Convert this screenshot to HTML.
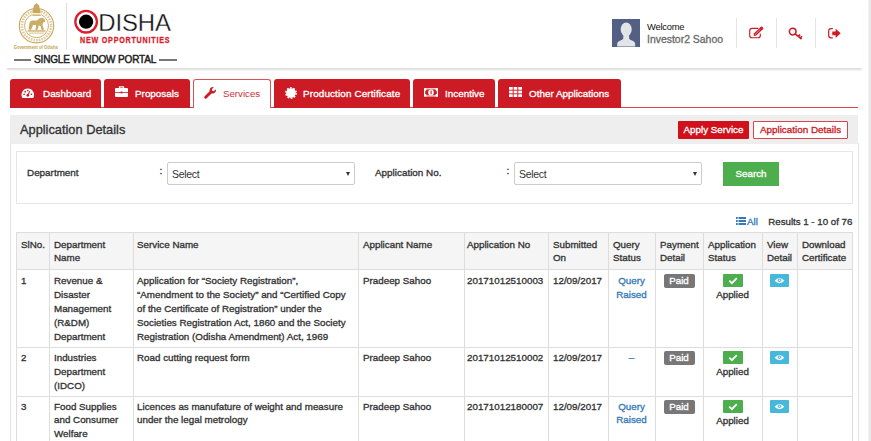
<!DOCTYPE html>
<html><head><meta charset="utf-8">
<style>
*{box-sizing:border-box;margin:0;padding:0}
html,body{width:871px;height:441px;overflow:hidden;background:#fff}
body{font-family:"Liberation Sans",sans-serif;color:#333;position:relative;font-size:9.8px}
.abs{position:absolute}
.m{-webkit-text-stroke:0.32px currentColor}
#sb{left:869px;top:0;width:2px;height:441px;background:#e8e8e8;box-shadow:-1px 0 0 #f3f3f3}
#hdr{left:6px;top:0;width:857px;height:68px;background:#fff;box-shadow:0 3px 2px -1px rgba(0,0,0,.14)}
.tab{position:absolute;top:79px;height:29px;background:#cc1b25;border-radius:3px 3px 0 0;color:#fff;font-size:9.9px;line-height:29.4px;white-space:nowrap}
.tab span{position:absolute;top:0}
.tab svg{position:absolute}
#tabline{left:10px;top:107px;width:848px;height:1px;background:#d9434b}
.tab.act{background:#fff;border:1px solid #dc5058;border-bottom:none;color:#cc3038;top:79px;height:29px}
#ph{left:10px;top:115px;width:848px;height:28.5px;background:#eee}
#pb{left:10px;top:143px;width:849px;height:300px;border:1px solid #e4e4e4;border-top:none}
#sbx{left:16px;top:151px;width:837px;height:53px;border:1px solid #e6e6e6}
.sel{position:absolute;top:162px;height:23px;border:1px solid #ccc;border-radius:2px;background:#fff;font-size:10.5px;letter-spacing:-0.3px;line-height:22px;padding-left:4px;color:#333}
.sel:after{content:"";position:absolute;right:4px;top:9px;border:2.6px solid transparent;border-top:4.5px solid #333}
.lbl{position:absolute;font-size:9.9px;top:167px;line-height:12px;white-space:nowrap}
table{position:absolute;left:16px;top:232px;width:836px;border-collapse:collapse;table-layout:fixed;font-size:9.8px;line-height:13.9px}
td,th{border:1px solid #ddd;padding:4.5px 3px 3.5px 4px;vertical-align:top;text-align:left;font-weight:normal;overflow:hidden;white-space:nowrap}
th{background:#f5f5f5}
a{color:#337ab7;text-decoration:none}
.paid{display:inline-block;background:#777;color:#fff;border-radius:2px;font-size:9.8px;line-height:14px;height:14px;width:31px;text-align:center;margin-top:0;vertical-align:top}
.ok{display:block;margin:0 auto 1px;width:20px;height:13px;background:#4cae4c;border-radius:1px;position:relative}
.eye{display:block;margin:0 0 0 3px;width:19px;height:13px;background:#46b8da;border-radius:1px;position:relative}
td.c{text-align:center;padding-left:2px;padding-right:3px}
tr.r2 td{padding-top:3px;padding-bottom:3.5px}
tr.r3 td{padding-top:2.5px}
tr.r1 td{padding-top:4.3px;padding-bottom:3.2px}
.an{padding-left:2px;padding-right:0}
.sv{padding-left:3px}
</style></head><body>
<div class="abs" id="sb"></div>
<div class="abs" id="hdr"></div>

<!-- emblem -->
<svg class="abs" style="left:12px;top:0px" width="50" height="54" viewBox="0 0 50 54">
 <circle cx="24.5" cy="25.7" r="17.2" fill="#fff" stroke="#c9a85f" stroke-width="1.1"/>
 <circle cx="24.5" cy="25.7" r="14.6" fill="none" stroke="#e0cb9c" stroke-width="2.6" stroke-dasharray="1.6 1.1"/>
 <circle cx="24.5" cy="25.7" r="12" fill="#fff" stroke="#c9a85f" stroke-width="0.9"/>
 <path d="M21 14 q-1.500 -3 0.500 -5.500 q-0.500 -3.500 3 -5.300 q3.500 1.800 3 5.300 q2 2.500 0.500 5.500z" fill="#c9a85f"/>
 <rect x="20" y="13.200" width="9" height="1.600" fill="#fff"/>
 <rect x="20.300" y="14.500" width="8.400" height="1.300" fill="#c9a85f"/>
 <path d="M16.500 29.500 l1 -6.500 q0.500 -2.500 3.500 -2.500 h4 q2.500 -3.500 6 -2.500 q2.500 1 2 4 l-2 0.500 l-0.500 3 q1.500 2 1 4.500 h-2 l-0.800 -3.800 l-2 -1 l-1.200 4.800 h-2 l0.500 -5 h-3 l-2 5z" fill="#ccac66"/>
 <rect x="15.500" y="30.300" width="18" height="1.300" fill="#c9a85f"/>
 <rect x="17" y="32.600" width="15" height="1" fill="#d9c08a"/>
 <text x="23.800" y="49.300" font-size="4.700" text-anchor="middle" fill="#c59f4c" font-family="Liberation Sans" font-weight="bold" textLength="44" lengthAdjust="spacingAndGlyphs">Government of Odisha</text>
</svg>
<div class="abs" style="left:66px;top:3px;width:1px;height:47px;background:#ddd"></div>
<!-- ODISHA logo -->
<svg class="abs" style="left:73px;top:9px" width="27" height="26" viewBox="0 0 27 26">
 <circle cx="13.100" cy="12.700" r="10.800" fill="#fff" stroke="#e21c2a" stroke-width="2.300"/>
 <circle cx="13.100" cy="12.700" r="7.150" fill="#000"/>
</svg>
<div class="abs" id="disha" style="left:98.3px;top:9.3px;font-size:23.9px;line-height:28px;color:#111;letter-spacing:-0.1px;-webkit-text-stroke:0.3px #fff">DISHA</div>
<div class="abs" id="newopp" style="left:79.7px;top:33.6px;font-size:9.4px;line-height:12px;font-weight:bold;color:#d5202c;letter-spacing:1.04px;white-space:nowrap;transform-origin:0 0;transform:scaleX(0.76);-webkit-text-stroke:0.3px #d5202c">NEW OPPORTUNITIES</div>
<div class="abs" style="left:13.7px;top:58.8px;width:17.1px;height:2.7px;background:#777"></div>
<div class="abs" id="swp" style="-webkit-text-stroke:0.45px #222;left:34px;top:54px;font-size:10px;line-height:12px;color:#222;white-space:nowrap;letter-spacing:-0.15px">SINGLE WINDOW PORTAL</div>
<div class="abs" style="left:159.3px;top:58.8px;width:17.3px;height:2.7px;background:#777"></div>

<!-- user -->
<div class="abs" style="left:612px;top:19px;width:28px;height:28px;background:#535f83;overflow:hidden">
 <svg width="28" height="28" viewBox="0 0 28 28" style="display:block"><ellipse cx="14.200" cy="10.400" rx="5.500" ry="7" fill="#e2e5e6"/><path d="M11.300 15 h5.800 v4.200 q0.300 1.600 3.500 2.600 q2.600 0.800 2.600 3 v2.700 h-18 v-2.700 q0 -2.200 2.600 -3 q3.200 -1 3.500 -2.600z" fill="#e2e5e6"/></svg>
</div>
<div class="abs" id="wel" style="left:647px;top:20.5px;font-size:9.4px;line-height:12px;color:#111;letter-spacing:-0.25px">Welcome</div>
<div class="abs m" id="inv" style="left:647px;top:33.5px;font-size:10.45px;line-height:12px;color:#6c6c6c;white-space:nowrap">Investor2 Sahoo</div>
<div class="abs" style="left:736px;top:18px;width:1px;height:30px;background:#e3e3e3"></div>
<div class="abs" style="left:776px;top:18px;width:1px;height:30px;background:#e3e3e3"></div>
<div class="abs" style="left:815px;top:18px;width:1px;height:30px;background:#e3e3e3"></div>
<!-- edit icon -->
<svg class="abs" style="left:749px;top:26px" width="16" height="13" viewBox="0 0 16 13"><path d="M9.300 2.300 H3 Q0.700 2.300 0.700 4.600 V9.400 Q0.700 11.700 3 11.700 H9 Q11.300 11.700 11.300 9.400 V7.800" fill="none" stroke="#cc1b25" stroke-width="1.150"/><path d="M4.600 10 l0.500 -2.700 l6.800 -6.600 q0.600 -0.500 1.300 0.100 l0.900 0.900 q0.500 0.600 0 1.200 l-6.800 6.600z" fill="#cc1b25"/><path d="M5.900 8.700 l5.300 -5.200" stroke="#fff" stroke-width="0.500"/></svg>
<!-- key icon -->
<svg class="abs" style="left:788px;top:26.500px" width="16" height="14" viewBox="0 0 16 14"><circle cx="4.700" cy="4.600" r="3.300" fill="none" stroke="#cc1b25" stroke-width="1.550"/><path d="M6.800 6.600 L13.600 12 M10.300 9.400 l1.900 -1.900 M12.300 11 l1.700 -1.700" fill="none" stroke="#cc1b25" stroke-width="1.600"/></svg>
<!-- signout icon -->
<svg class="abs" style="left:828px;top:27.500px" width="14" height="11" viewBox="0 0 14 11"><path d="M4.800 0.700 H3 Q0.700 0.700 0.700 3 V7.600 Q0.700 9.900 3 9.900 H4.800" fill="none" stroke="#cc1b25" stroke-width="1.250"/><path d="M4.300 3.400 H7.600 V0.700 L12.700 5.300 L7.600 9.900 V7.200 H4.300z" fill="#cc1b25"/></svg>

<!-- tabs -->
<div class="abs" id="tabline"></div>
<div class="tab m" style="left:10px;width:91px"><svg style="left:10.800px;top:8.600px" width="13.600" height="11.500" viewBox="0 0 13 11"><path d="M6.500 0.500 A6 6 0 0 0 1.300 9.500 H11.700 A6 6 0 0 0 6.500 0.500z" fill="#fff"/><circle cx="6.500" cy="7" r="1.300" fill="#cc1b25"/><path d="M6.500 7 L8.500 3" stroke="#cc1b25" stroke-width="1"/><circle cx="3" cy="6" r="0.800" fill="#cc1b25"/><circle cx="4" cy="3.500" r="0.800" fill="#cc1b25"/><circle cx="6.500" cy="2.400" r="0.800" fill="#cc1b25"/><circle cx="10" cy="6" r="0.800" fill="#cc1b25"/></svg><span style="left:33px">Dashboard</span></div>
<div class="tab m" style="left:104px;width:86px"><svg style="left:11.300px;top:6.800px" width="13" height="11" viewBox="0 0 13 11"><path d="M4.500 2 V0.800 H8.500 V2" fill="none" stroke="#fff" stroke-width="1.200"/><rect x="0" y="2" width="13" height="9" rx="1" fill="#fff"/><rect x="0" y="6" width="13" height="0.800" fill="#cc1b25"/><rect x="5.500" y="5.600" width="2" height="1.800" fill="#cc1b25"/></svg><span style="left:31px">Proposals</span></div>
<div class="tab act" style="left:193px;width:78px"><svg style="left:9.500px;top:7px" width="13" height="12" viewBox="0 0 13 12"><path d="M1.700 10.300 L7 5" stroke="#cc1b25" stroke-width="2.900" stroke-linecap="round"/><path d="M11.800 2.200 L9.800 4.200 L8.300 3.700 L7.800 2.200 L9.800 0.200 A3.200 3.200 0 1 0 11.800 2.200z" fill="#cc1b25"/></svg><span style="left:29px;font-size:9.7px;line-height:28.4px">Services</span></div>
<div class="tab m" style="left:273.5px;width:136.5px"><svg style="left:11px;top:7.500px" width="12" height="12" viewBox="0 0 12 12"><circle cx="6" cy="6" r="4.800" fill="#fff"/><circle cx="6" cy="6" r="5.200" fill="none" stroke="#fff" stroke-width="1.400" stroke-dasharray="1.800 1.470"/></svg><span style="left:29.5px;letter-spacing:0.13px">Production Certificate</span></div>
<div class="tab m" style="left:413px;width:82px"><svg style="left:10.500px;top:9px" width="14" height="8.800" viewBox="0 0 15 9"><rect x="0" y="0" width="15" height="9" rx="0.800" fill="#fff"/><rect x="1.300" y="1.300" width="12.400" height="6.400" fill="#cc1b25"/><ellipse cx="7.500" cy="4.500" rx="3" ry="3.200" fill="#fff"/><rect x="7" y="2.500" width="1.200" height="4" fill="#cc1b25"/><circle cx="1.300" cy="1.300" r="1.500" fill="#fff"/><circle cx="13.700" cy="1.300" r="1.500" fill="#fff"/><circle cx="1.300" cy="7.700" r="1.500" fill="#fff"/><circle cx="13.700" cy="7.700" r="1.500" fill="#fff"/></svg><span style="left:32px">Incentive</span></div>
<div class="tab m" style="left:498px;width:123px"><svg style="left:11px;top:8px" width="13" height="10" viewBox="0 0 13 11" preserveAspectRatio="none"><g fill="#fff"><rect x="0" y="0" width="3.700" height="3"/><rect x="4.650" y="0" width="3.700" height="3"/><rect x="9.300" y="0" width="3.700" height="3"/><rect x="0" y="4" width="3.700" height="3"/><rect x="4.650" y="4" width="3.700" height="3"/><rect x="9.300" y="4" width="3.700" height="3"/><rect x="0" y="8" width="3.700" height="3"/><rect x="4.650" y="8" width="3.700" height="3"/><rect x="9.300" y="8" width="3.700" height="3"/></g></svg><span style="left:31px">Other Applications</span></div>

<!-- panel -->
<div class="abs" id="ph"></div>
<div class="abs" id="pb"></div>
<div class="abs m" id="apd" style="left:20px;top:122px;font-size:12.8px;line-height:15px;color:#333;white-space:nowrap">Application Details</div>
<div class="abs m" id="b1" style="left:678px;top:121px;width:71px;height:17.6px;background:#d0111c;color:#fff;border-radius:1px;font-size:9.8px;line-height:17.6px;text-align:center;white-space:nowrap">Apply Service</div>
<div class="abs m" id="b2" style="left:753px;top:121px;width:95px;height:17.6px;background:#fff;color:#cc1b25;border:1px solid #d9434b;border-radius:1px;font-size:9.9px;line-height:15.6px;text-align:center;white-space:nowrap">Application Details</div>

<div class="abs" id="sbx"></div>
<div class="lbl m" style="left:27px">Department</div>
<div class="lbl m" style="left:159.6px;top:165px">:</div>
<div class="sel" style="left:167px;width:188px">Select</div>
<div class="lbl m" style="left:375px">Application No.</div>
<div class="lbl m" style="left:506.6px;top:165px">:</div>
<div class="sel" style="left:514px;width:188px">Select</div>
<div class="abs m" id="srch" style="left:723px;top:162px;width:56px;height:24px;background:#4cae4c;color:#fff;border-radius:0;font-size:9.8px;line-height:24.6px;text-align:center">Search</div>

<!-- results line -->
<svg class="abs" style="left:736px;top:217px" width="10" height="8" viewBox="0 0 10 8"><g fill="#337ab7"><rect x="0" y="0" width="1.700" height="2"/><rect x="2.500" y="0" width="7.500" height="2"/><rect x="0" y="3" width="1.700" height="2"/><rect x="2.500" y="3" width="7.500" height="2"/><rect x="0" y="6" width="1.700" height="2"/><rect x="2.500" y="6" width="7.500" height="2"/></g></svg>
<div class="abs m" id="all" style="left:747px;top:216px;font-size:9.8px;line-height:12px;color:#337ab7">All</div>
<div class="abs m" id="res" style="left:768.3px;top:216px;font-size:9.7px;line-height:12px;color:#333;white-space:nowrap">Results 1 - 10 of 76</div>

<table class="m">
<colgroup><col style="width:33px"><col style="width:84px"><col style="width:225px"><col style="width:106px"><col style="width:84px"><col style="width:60px"><col style="width:47px"><col style="width:48px"><col style="width:59px"><col style="width:35px"><col style="width:55px"></colgroup>
<tr><th>SlNo.</th><th>Department<br>Name</th><th class="sv">Service Name</th><th>Applicant Name</th><th class="an">Application No</th><th>Submitted<br>On</th><th>Query<br>Status</th><th>Payment<br>Detail</th><th>Application<br>Status</th><th>View<br>Detail</th><th>Download<br>Certificate</th></tr>
<tr class="r1"><td>1</td><td>Revenue &amp;<br>Disaster<br>Management<br>(R&amp;DM)<br>Department</td><td class="sv">Application for “Society Registration”,<br>“Amendment to the Society” and “Certified Copy<br>of the Certificate of Registration” under the<br>Societies Registration Act, 1860 and the Society<br>Registration (Odisha Amendment) Act, 1969</td><td>Pradeep Sahoo</td><td class="an">20171012510003</td><td>12/09/2017</td><td class="c"><a>Query<br>Raised</a></td><td class="c"><span class="paid">Paid</span></td><td class="c"><span class="ok"><svg width="20" height="13" viewBox="0 0 20 13" style="display:block"><path d="M6.300 6.600 L8.900 9.200 L13.800 4.200" fill="none" stroke="#fff" stroke-width="1.800"/></svg></span>Applied</td><td><span class="eye"><svg width="19" height="13" viewBox="0 0 19 13" style="display:block"><path d="M4.600 6.700 Q9.500 1.200 14.400 6.700 Q9.500 11.600 4.600 6.700z" fill="#fff"/><circle cx="9.500" cy="6.200" r="1.700" fill="#46b8da"/><circle cx="9.500" cy="6.200" r="0.800" fill="#fff"/></svg></span></td><td></td></tr>
<tr class="r2"><td>2</td><td>Industries<br>Department<br>(IDCO)</td><td class="sv">Road cutting request form</td><td>Pradeep Sahoo</td><td class="an">20171012510002</td><td>12/09/2017</td><td class="c"><a>–</a></td><td class="c"><span class="paid">Paid</span></td><td class="c"><span class="ok"><svg width="20" height="13" viewBox="0 0 20 13" style="display:block"><path d="M6.300 6.600 L8.900 9.200 L13.800 4.200" fill="none" stroke="#fff" stroke-width="1.800"/></svg></span>Applied</td><td><span class="eye"><svg width="19" height="13" viewBox="0 0 19 13" style="display:block"><path d="M4.600 6.700 Q9.500 1.200 14.400 6.700 Q9.500 11.600 4.600 6.700z" fill="#fff"/><circle cx="9.500" cy="6.200" r="1.700" fill="#46b8da"/><circle cx="9.500" cy="6.200" r="0.800" fill="#fff"/></svg></span></td><td></td></tr>
<tr class="r3"><td>3</td><td>Food Supplies<br>and Consumer<br>Welfare<br>Department</td><td class="sv">Licences as manufature of weight and measure<br>under the legal metrology</td><td>Pradeep Sahoo</td><td class="an">20171012180007</td><td>12/09/2017</td><td class="c"><a>Query<br>Raised</a></td><td class="c"><span class="paid">Paid</span></td><td class="c"><span class="ok"><svg width="20" height="13" viewBox="0 0 20 13" style="display:block"><path d="M6.300 6.600 L8.900 9.200 L13.800 4.200" fill="none" stroke="#fff" stroke-width="1.800"/></svg></span>Applied</td><td><span class="eye"><svg width="19" height="13" viewBox="0 0 19 13" style="display:block"><path d="M4.600 6.700 Q9.500 1.200 14.400 6.700 Q9.500 11.600 4.600 6.700z" fill="#fff"/><circle cx="9.500" cy="6.200" r="1.700" fill="#46b8da"/><circle cx="9.500" cy="6.200" r="0.800" fill="#fff"/></svg></span></td><td></td></tr>
</table>
</body></html>
